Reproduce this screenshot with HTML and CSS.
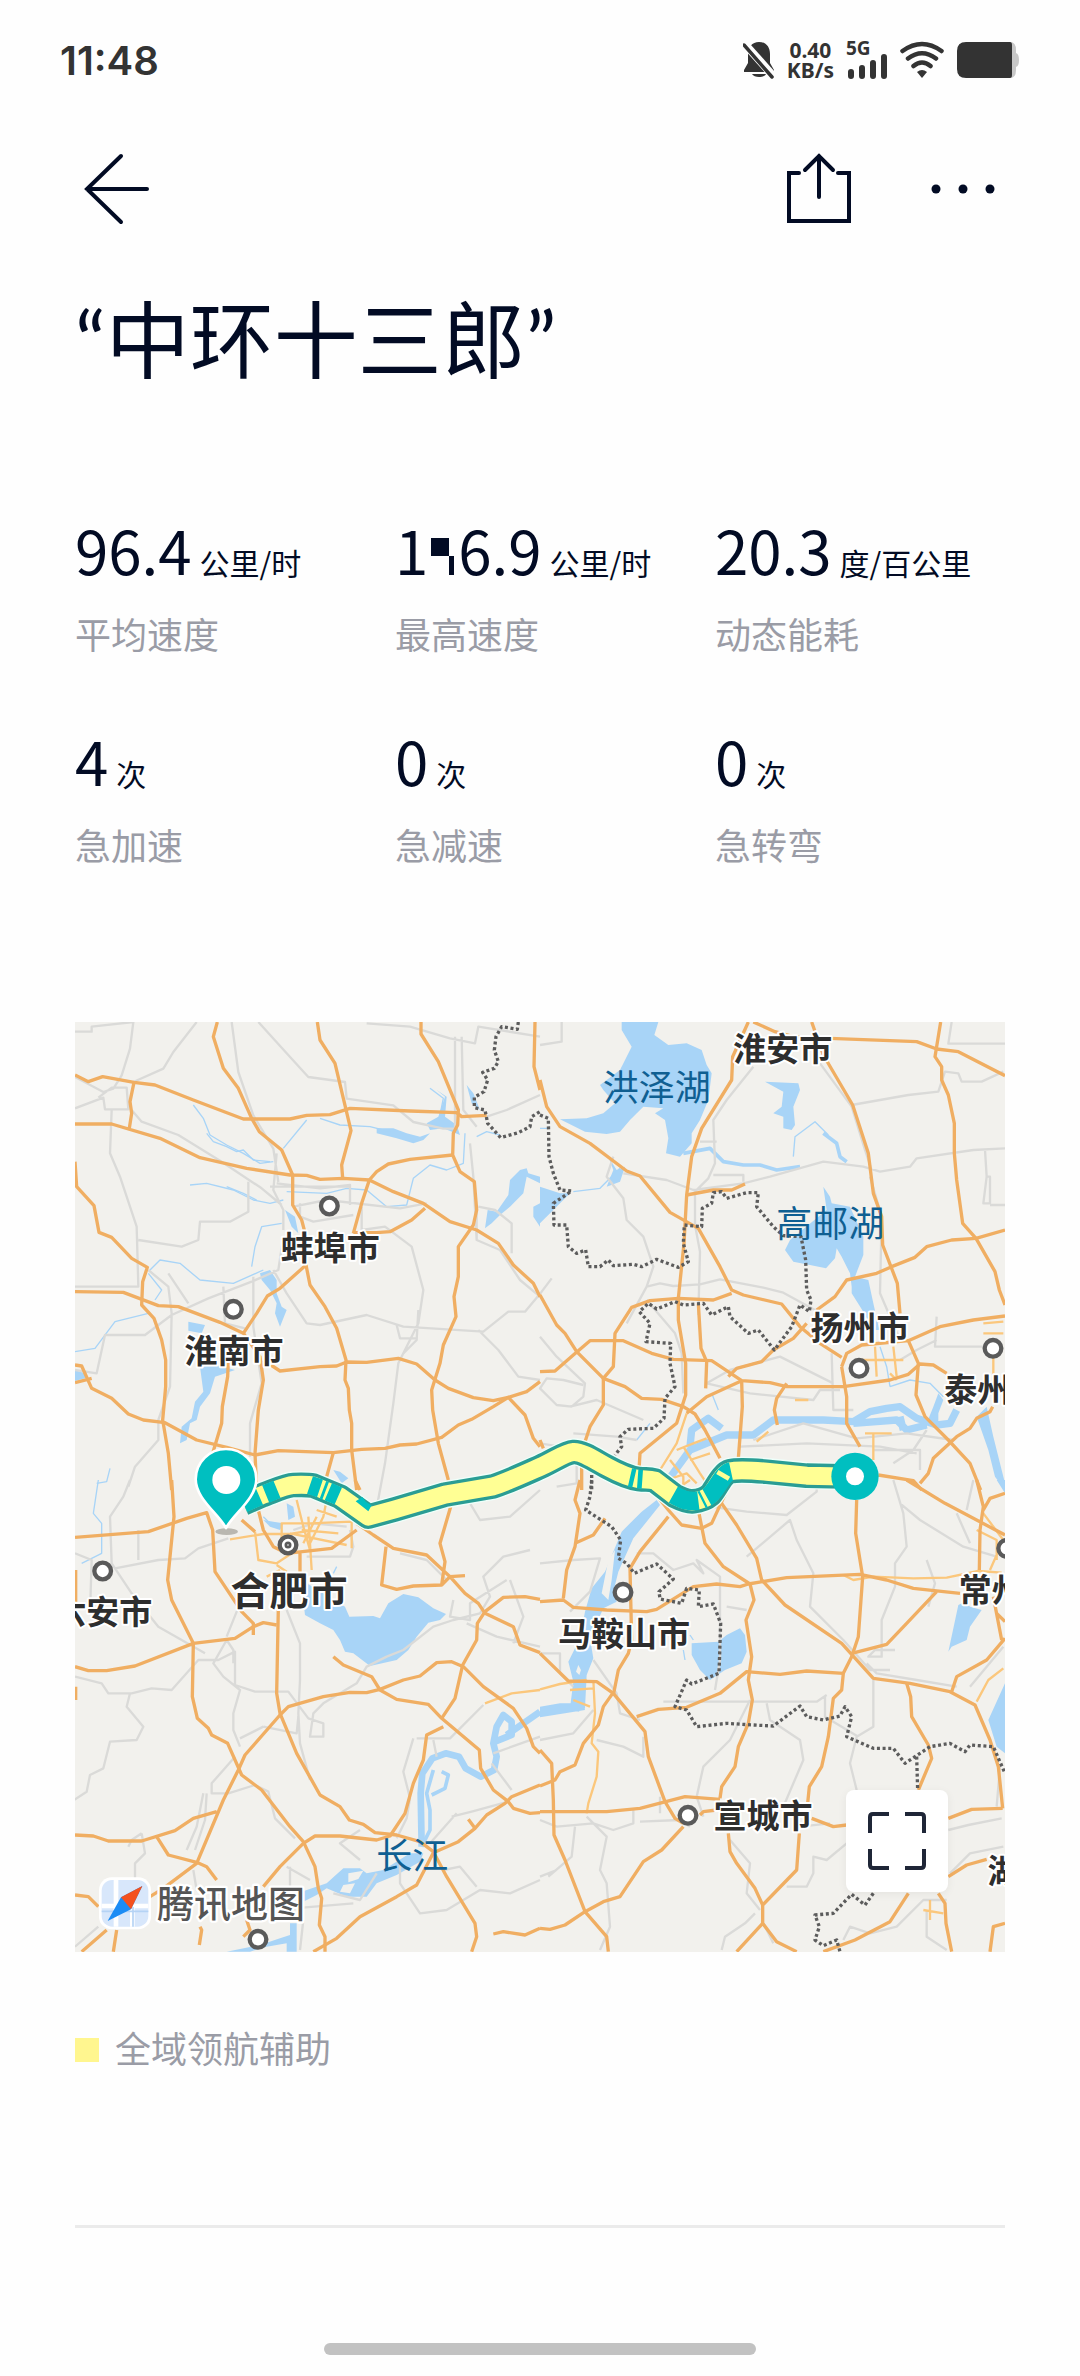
FILE: index.html
```html
<!DOCTYPE html>
<html lang="zh-CN">
<head>
  <meta charset="UTF-8">
  <meta name="viewport" content="width=device-width, initial-scale=1">
  <title>行程详情</title>
  <link rel="stylesheet" href="styles.css">
</head>
<body>

<div class="status-bar">
  <span class="clock">11:48</span>
  <div class="status-icons">
    <svg class="icon-bell" viewBox="0 0 32 38" fill="#333">
      <path d="M16 1c7 0 11 5 11 12v9l4 7v2H1v-2l4-7v-9C5 6 9 1 16 1z"/>
      <path d="M9 33h14c-2 4-12 4-14 0z"/>
      <path d="M-1 0 33 38" stroke="#fefefe" stroke-width="8"/>
      <path d="M1 4 29 36" stroke="#333" stroke-width="3.5" stroke-linecap="round"/>
    </svg>
    <div class="net-speed"><span>0.40</span><span>KB/s</span></div>
    <div class="signal">
      <span>5G</span>
      <svg viewBox="0 0 42 26" stroke="#333" stroke-width="6" stroke-linecap="round">
        <path d="M5 19v4M16 15v8M27 10v13M38 4v19"/>
      </svg>
    </div>
    <svg class="icon-wifi" viewBox="0 0 44 38" fill="none" stroke="#333" stroke-width="4.5" stroke-linecap="round">
      <path d="M2.500 10Q22-4 41.500 10M8 17.500Q22 7 36 17.500M13.500 25Q22 18 30.500 25"/>
      <path d="M17 31q5-4 10 0l-5 6z" fill="#333" stroke="none"/>
    </svg>
    <svg class="icon-battery" viewBox="0 0 64 38">
      <path d="M50 1h4q6 0 6 8v3q3 1 3 7t-3 7v3q0 8-6 8h-4z" fill="#c8c8c8"/>
      <path d="M10 1h44q2 0 2 3v30q0 3-2 3H10q-9 0-9-9V10q0-9 9-9z" fill="#333"/>
    </svg>
  </div>
</div>

<header class="nav">
  <button class="nav-btn" aria-label="返回">
    <svg viewBox="0 0 84 84"><path d="M46 10 12 43l34 33M12 43h60"/></svg>
  </button>
  <div class="nav-right">
    <button class="nav-btn" aria-label="分享">
      <svg viewBox="0 0 84 84"><path d="M22 27H12v48h60V27H61M42 10v41M28 24 42 10l14 14"/></svg>
    </button>
    <button class="nav-btn" aria-label="更多">
      <svg viewBox="0 0 84 84" class="dots"><circle cx="15" cy="43" r="4.500"/><circle cx="42" cy="43" r="4.500"/><circle cx="69" cy="43" r="4.500"/></svg>
    </button>
  </div>
</header>

<main class="container">
  <h1>“中环十三郎”</h1>

  <div class="stats">
    <div class="stat">
      <p class="value">96.4<span class="unit">公里/时</span></p>
      <p class="label">平均速度</p>
    </div>
    <div class="stat">
      <p class="value">1<svg class="mask" viewBox="0 0 30 46"><path d="M3 9h18v18h5v19h-5V27H3z"/></svg>6.9<span class="unit">公里/时</span></p>
      <p class="label">最高速度</p>
    </div>
    <div class="stat">
      <p class="value">20.3<span class="unit">度/百公里</span></p>
      <p class="label">动态能耗</p>
    </div>
    <div class="stat">
      <p class="value">4<span class="unit">次</span></p>
      <p class="label">急加速</p>
    </div>
    <div class="stat">
      <p class="value">0<span class="unit">次</span></p>
      <p class="label">急减速</p>
    </div>
    <div class="stat">
      <p class="value">0<span class="unit">次</span></p>
      <p class="label">急转弯</p>
    </div>
  </div>

  <div class="map">
    <svg class="map-canvas" viewBox="0 0 2790 2790">
      <!-- 西北 -->
      <g transform="translate(-45 -36)">
        <g class="water">
          <path d="M1275 655 1283 600 1310 605 1345 555 1350 510 1380 480 1400 475 1405 490 1440 500 1440 520 1400 500 1390 550 1350 590 1320 615 1295 640zM1440 580l-20 10v30l20 30zM420 1070l50-5 55 15-60 20-15 50-30 40-10 40-20 10-10 50-20 10 5-50 30-25 10-50 25-30zM600 790l30-10 20 30v40l15 40 15 10-20 50-15-40 5-30-20-40-25-30zM1100 340l35-20 20-60-25-20 30 20-5 60 35 25 10 30-50-20-40 5zM950 355l50 0 40 15 40 10 30-10-20 20-30 10-50-15-60-15zM1220 225l20 25 20 50-25-20zM45 1080l30 10v15l-30 8zM385 935l50 10-10 25-40-8zM820 1380l20 5 25 20-20 15zM675 600l30 20 10 50-20-20z"/>
        </g>
        <path class="river" d="M400 285l30 40 20 50 50 30 50 25 50 30 40-5M390 525l50-5 80 20 60 30 50 10 40-10M780 325l60 20 90 5 60 15M1110 235l40 30-10 50M1250 380l30-15 40 10M1215 370l-5 90-50 20-50-15-50 40-20 80-60 5-60-50-60-5-60 15-120-5M665 640l-60 10-20 60-10 60M270 780l30-30 60 10 60 50 100 10 90-40M265 790l40 50-20 30M45 1025l60-10 60-80 100-25M740 330l-70 85M150 1375l-10 40-30 5"/>
        <path class="river" d="M440 370l20 25 40 15 30 15 20-5 30 30 50 5M500 530l50 20 40 20" stroke-width="9"/>
        <g class="road-minor">
          <path d="M45 65h50v-15l125-14-10 80-25 80-25 40-30 10-85-45M45 295l85-32 5 35h70l-5-65h-45l-40 30M410 36l-70 90-30 50-90 40M155 300l-5 130 30 70 50 150 5 180H45M515 36l20 150 45 130 60 100 15 100M595 36l100 110 50 55 110 15 5 50 140 20 60 50 90 20h35V80M920 40l130 10 120 35 75 15 10-50 185 30M1440 255l-100 45-60 20M215 300l30 35 110 40 130 80 120 80 60 50M235 690l130 20 50-20 5-55h90l55-30v-90M630 530h240M700 590l100-20 220 25 80-15M650 520l130 15 90-10v60M720 580v40l40 15 120-20M905 590v70l70-10 80 60 35 130-15 100-60 120-15 120-25 180-30 160M1255 590l50 10 50 40v90M1250 590v100l70 30 60 90 60 50M670 680l-15 100-80 35-130 50-110 50-80 60-120 0-25 115-65-10M265 780l60 50 10 80-5 220-35 100v60l-70 80-20 60M325 790l60 90M580 800v150l25 170-35 120v100M640 780l40 70 60 90 40 5 140-30 110 35 240 15 75-60h50l50-60 30-40M1255 960l60 60 60 80 65 10M1010 945l10 40h50M1075 900l-5 90-40 40M1230 400l10 100 10 190M650 430l-10 110 30 60v60M490 830l5 110 60 15M1205 80l5 220 40 50"/>
        </g>
        <g class="road">
          <path d="M45 195 85 215 128 200 222 217 285 225 400 270 550 327 690 327 740 316 810 314 870 295 1050 303 1190 308 1205 320 1280 316"/>
          <path d="M222 217 210 275 215 310 208 355M45 342 155 342 300 385 420 443 560 475 690 495 740 496 780 508 850 505 928 510 1000 545 1090 580 1170 635 1250 660 1315 700 1360 765 1420 820 1440 860"/>
          <path d="M472 36 460 80 490 175 535 235 575 325 598 365 665 420 698 495 698 585 725 630 738 680 738 765 750 825 795 890 830 955 858 1050 855 1110 865 1135 868 1200 875 1240 875 1320 890 1440"/>
          <path d="M772 36 780 90 825 160 850 265 873 362 845 465 848 505"/>
          <path d="M1083 36 1083 72 1135 155 1195 300 1193 345 1180 370 1178 435 1200 485 1243 515 1250 600 1240 645 1195 710 1195 800 1182 860 1188 920 1150 1005 1140 1060 1115 1140 1118 1200 1135 1300 1165 1410"/>
          <path d="M1178 435 1050 448 985 462 950 485 928 510 905 580 880 670M1095 595 1055 630 990 665 950 668 880 668M738 765 660 835 622 858 590 910 550 970"/>
          <path d="M45 845 190 847 295 887 355 890 480 937 550 970 600 1040 610 1110 595 1200 585 1330 590 1440"/>
          <path d="M45 455 50 530 102 587 117 667 155 682 215 745 262 772 248 815 245 885 282 925 305 990 317 1050 317 1130 308 1230 325 1330 335 1440"/>
          <path d="M45 1065 65 1068 95 1135 155 1165 205 1212 250 1230 315 1238 410 1290 500 1312 585 1335 655 1322 820 1328 905 1318 975 1315 1020 1305 1070 1302 1145 1282 1195 1245 1235 1228 1300 1190 1345 1162 1400 1145 1440 1115M45 1118 95 1105"/>
          <path d="M610 1050 660 1083 780 1070 830 1068 860 1056 920 1057 1015 1045 1070 1062 1125 1110 1165 1135 1240 1163 1300 1172 1345 1162 1395 1215 1420 1285 1440 1310"/>
          <path d="M505 1050 503 1100 487 1190 485 1240 458 1330M820 1328 800 1400M1425 36 1422 170 1440 240"/>
        </g>
        <path class="border-line" d="M1375 36 1372 58 1325 50 1308 80 1303 120 1315 155 1303 175 1268 187 1283 210 1272 245 1243 262 1243 293 1275 300 1283 340 1322 383 1375 368 1410 350 1415 320 1440 305"/>
      </g>

      <!-- 东北 -->
      <g transform="translate(1395 -36)">
        <g class="water">
          <path d="M245 36 355 36 343 75 385 105 440 100 485 120 500 165 515 190 505 270 480 330 455 370 455 400 420 440 378 430 385 385 375 330 345 310 370 295 310 290 270 330 240 365 200 372 135 365 60 328 140 325 190 310 225 280 190 240 180 225 240 180 275 110 245 60z"/>
          <path d="M850 530 870 560 875 580 930 590 970 680 970 735 945 800 985 810 1000 880 1018 960 1000 960 970 905 935 850 935 830 930 790 905 740 890 715 885 745 858 775 810 765 760 755 735 720 750 690 860 600z"/>
          <path d="M675 215l100 5 5 20-20 50 5 55-10 15-25-5v-35l-30-10 25-20 5-45z"/>
          <path d="M1160 1240l20-50 15-40 15 20-15 40 0 40zM1310 1220l30-30 20 90 35 140v20l-30-40-20-80zM0 530l60 20 30 0-50 50-40 40z"/>
          <path d="M205 440l15 40-20 50 40-15 15-45-25 10z"/>
        </g>
        <g class="river wide">
          <path d="M370 1430l80-110 110-45 80 0 60-45 150 0 90 5 50-30 50-10 40-5 50 35 60 20 40-5 20-40M450 1310l5-50 50-35 40 30M940 1240l130-10 30 30 60-15M1080 1220l10 40" stroke-width="22"/>
        </g>
        <path class="river" d="M760 440l5-60 60-45 40 40M100 545l80-10 60-60M0 355h25M1050 1130l60-20 60 10 40 40M515 1150l20 50M1020 1010l20 60 10 60M290 1290l40-50"/>
        <path class="river stream" d="M430 430l80-15 40 40 60 10 50 0 50 15 70-10M850 370l40 30 10 40 20 15"/>
        <g class="road-minor">
          <path d="M0 105l65-10V36M640 170l-80 100-40 60 5 130-20 45-40 40v100l15 80-5 190M840 160l95 130 40 130 20 60M935 285l170-30 90-10 20-60 40 5 10 25h60l65-30M1235 36l-10 65h170M220 440l-20 60 50 65 10 65 50 50 30 90-20 60-60 110M250 490l130 20 80 30 150-20 80-20 160-45 120 15 50 15 90-15 20-25 170-25 100-5M520 495h90v20M1335 420l5 80h10v80h-20l10-80M1395 585h-45M480 395h50M320 830l40-10 40 8 80-5 60-15 130 25 60 15 110 60M320 870l85 100 20 60 5 120M990 500l35 120-5 230 60 140M0 980l50 60 85 80-5 40-35 30-45-5-50-50 20-30 50 5 60 15M90 1190l80-20 140 60M100 1270l130 10 60 10M500 1120l70-40 150-40 160 80M500 1120l130 30 190 20 20-30h60M875 1030l5 170h60M640 1290l150-50 160 45 150-15 140 20M600 1310l200-10 220 10 110 20M1190 920l-5 90h160M1080 1050l50-30 60-30M1060 1360l60-40 40-60M1000 1320h140v60M0 1300l60 10 60-10M50 1350l60 10v60l-60 10"/>
        </g>
        <path class="road-city" d="M440 1210 410 1300 360 1380M410 1320l50-20 40-15M430 1310l50 80 20 30M450 1350l60-20M390 1350l40 50v40M1005 1010l5 90M1060 1010l10 90M960 1050h130M1050 1090l20 20M1000 1270v80M975 1270h80M1330 940l60-5M1330 970h60M1360 1040v130M380 1410l60-20 30 30M650 1295l35-30M765 1170h40"/>
        <g class="road">
          <path d="M0 210 20 290 60 350 150 400 260 483 300 498 390 607 475 655 540 770 575 840 610 855 725 882 780 950 840 1000 905 1042"/>
          <path d="M625 36 578 140 575 210 485 355 455 440 440 555 432 700 415 865 415 930 437 1060 437 1155 410 1240 300 1330 297 1380"/>
          <path d="M640 36 705 65 760 80 870 85 1130 95 1190 117 1255 125 1395 197M815 36 850 135 938 285 985 430 1000 550 1025 620 1028 705 1072 820 1080 910"/>
          <path d="M1202 36 1185 140 1205 170 1205 210 1225 255 1243 340 1243 430 1250 510 1268 640 1308 685 1365 785 1378 840 1395 885"/>
          <path d="M1395 660 1308 685 1235 690 1160 710 1125 742 1055 770 1010 790 920 810 885 860 830 900M440 555 520 540 575 540 615 522"/>
          <path d="M0 855 50 945 75 970 110 1025 190 1105 255 1130 305 1165 365 1168 430 1190 465 1212 495 1260 540 1345"/>
          <path d="M0 1085 45 1083 100 1035 150 992 250 992 335 1030 400 1048 515 1052 605 1112 690 1118 740 1130 910 1130 1050 1110 1105 1093 1140 1062 1180 1065 1220 1090"/>
          <path d="M565 1100 590 1075 665 1055 700 1020 760 985 800 940M575 850 520 870 415 865 330 872 275 892 225 970 220 1070 190 1105 190 1185 150 1250 130 1310"/>
          <path d="M475 880 483 1015 500 1055 497 1135M605 1112 500 1160 440 1210M605 1112 607 1190 595 1345M740 1120 710 1165 703 1200 712 1245"/>
          <path d="M905 1070 920 1030 965 1005 1105 992 1200 950 1300 930 1395 918M905 1070 920 1160 920 1240 960 1310M1105 992 1135 1060 1128 1155 1155 1220 1225 1290 1290 1360 1322 1440"/>
          <path d="M1358 1190 1350 1205 1310 1225 1290 1255 1250 1280 1180 1345 1165 1390 1140 1420M1015 1395 1120 1412 1145 1440M125 1370v70M0 1290l10 25"/>
        </g>
        <path class="border-line" d="M0 315 25 325 27 440 40 490 60 540 95 543 40 580 42 645 80 645 85 710 110 730 137 720 145 770 180 770 205 750 220 767 280 763 305 770 350 748 415 772 445 755 430 700 433 645 485 650 487 595 515 580 520 548 545 545 560 565 620 548 655 548 650 590 700 650 730 677 783 680 797 750 800 840 813 870 808 905 780 885 755 950 703 1020 655 960 625 970 570 920 565 890 515 915 490 880 430 885 405 875 350 897 325 880 298 905 330 940 318 995 392 1000 390 1060 405 1130 375 1165 372 1225 340 1255 265 1258 240 1280 245 1310 225 1335M155 1395v45"/>
      </g>

      <!-- 西南 -->
      <g transform="translate(-45 1374)">
        <g class="water">
          <path d="M740 310 790 340 855 380 868 410 940 408 960 415 985 370 1030 342 1075 352 1120 385 1158 402 1140 420 1105 428 1070 470 1045 510 1010 540 930 558 880 520 855 515 840 480 820 450 780 430 735 405 732 380z"/>
          <path d="M800 1210l50-45 50 0 20 15 50-10 80-50 40 0-10 25-70 40-60 25-30 40-60 0-60-25-30 20-40 20-5 0v-30zM680 70l20 10 5 30-20 10zM610 120l30 5 30 5-10 20-30-10zM690 1330h20v85h-30v-25l-60 10-50 15h-70l100-20 60-20 30-10z"/>
        </g>
        <path d="M865 1180l45-8-15 25-30 10zM850 1215l35-5-15 30-30-5z" fill="#f2f1ed"/>
        <g class="river wide">
          <path d="M1085 1100l-3-160 5-60 30-45 40-15 40 10 20 35 45 25 40-20 8-40-10-40 10-50 20-35 25 20v40l-50 20M1340 765l100-70"/>
        </g>
        <path class="river stream" d="M1085 1100l25-50 0-60-10-50 20-70M1115 945l40-20 10-40-20-10"/>
        <path class="river" d="M115 0l-15 100 25 30v90l-60 30M820 280l10-20M610 110l30 30"/>
        <g class="road-minor">
          <path d="M210 0l-20 50-40 60 5 140 60 90 80 100 140 80M235 150v90M165 265l130-25 80-5 40-30 90-30M45 590l80 20 20 30 70 0 60-15 60 5 80-90 60 0 50-25v100l60 20 100 0 60 80 45 15v40h-40l10-70 30-30 100-60 30-50 60-30 50-20 90-70 60-20 80-20 30-50-20-60 60-60 80-20M195 640l15 0-10 40 50 60-20 40-80 5-20 80-40 20-10 50-60 40M500 480l-40 70 30 40 50 40-20 70 0 50 20 50M500 480l20 30v40M500 470l40-100M680 390l40 100 0 110-5 100 5 90 30 110M610 740l-70 35M610 740l100 20 5-50M525 830l-70 80 0 30h50l80-25 40 20 20 80 60 60M430 940l-20 100-30 70M440 940l-5 80-30 90M245 1060l-30 20-10 20M245 1060l10 60-30 30 0 100M1070 775h100l100-100M1060 775l-30 100 20 80-10 60-30 60M1120 780l10 50M1300 820l140-50M1295 850l60 80M1175 1010l60-15 110-30M1190 1000l-80 90M900 1050l-60 40 60 50M680 1160l70 40M950 1180l-50 80-80-20M1020 1150v60l60 90 80-10 100-60 90 10 90-40M1250 1220l-50-60-50 10M700 1285l180-15M730 1320l-10 90M400 1170l10 60 70 10M690 1160l0 80M870 150l10 50-10 30h-130M700 150l60-20 100 10M1020 220l80 20 60 60M1180 360l-10 50 60 10v-50l110-70M1220 430l90 40 130 30M1350 300l40 110-30 80M1200 20l60 100 90-10 90-80M90 400l5-160-50-20M45 1400l70-60"/>
        </g>
        <path class="road-city" d="M510 178l100-16 80 0 60-10M585 155l10 85 55 10 60-40M665 200V130l80 0 130-5v80M745 110l10 160M770 90l60 20M710 60l20 80 20 70M690 160l170 35M730 190l40-80M750 190l40-80 10-50M620 290l40-20M1275 670l80-30 85-10M725 150l110 10M650 255l30 20"/>
        <g class="road">
          <path d="M335 0 342 110 323 300 335 360 400 490 397 650 412 715 445 745 455 765 503 790 545 885 605 930 690 1040 730 1085 765 1160 775 1225 785 1255 778 1335 795 1370 795 1415"/>
          <path d="M45 172 265 155 380 115 440 98 458 150 465 275 545 395 580 430 580 465M45 560 85 572 140 572 225 558 400 490 525 475 580 440 610 428 650 435"/>
          <path d="M655 385 650 640 660 700 710 820 780 945 840 980 868 1020 910 1033 945 1058 1010 1065 1080 1085 1120 1115"/>
          <path d="M820 530 850 555 935 590 960 630 1010 658 1105 673 1145 715 1258 810 1262 865 1300 930 1345 965"/>
          <path d="M660 705 685 680 790 650 870 637 920 638 960 628 1030 600 1080 588 1130 548 1175 545 1210 560 1270 620 1360 685 1400 745 1420 800 1440 820"/>
          <path d="M660 705 555 825 535 870 490 960 410 1150 310 1225 270 1250M45 1065 100 1068 145 1083 245 1083 345 1052 400 1015 470 995M290 1070 325 1125 410 1147 440 1160 470 1200"/>
          <path d="M610 1220 660 1160 730 1090 765 1068 840 1068 950 1080 990 1068 1035 1000 1060 910 1090 840 1100 765 1150 740M1145 715 1185 655 1208 555 1250 480 1252 430 1275 395 1330 352 1395 350 1440 358"/>
          <path d="M885 0 900 30M890 130 940 165 1000 205 1100 225 1170 290 1215 340 1255 370 1275 400 1360 440 1380 495 1440 518M978 200 965 315 1010 328 1060 318 1145 315 1170 290 1215 287M1172 80 1140 190 1155 245 1145 315"/>
          <path d="M1345 965 1360 985 1410 1000 1440 998M1440 915 1355 950 1335 970 1280 1005 1245 1045 1195 1085 1120 1118 1070 1215 1010 1250 900 1310 830 1375 760 1415M1245 1045 1225 1018"/>
          <path d="M1120 1115 1160 1190 1245 1330 1250 1370 1235 1415M1300 1362 1330 1355 1395 1365 1440 1345M45 1245 85 1250 115 1280M65 1415 140 1350M160 1415 170 1350M420 1340 425 1350 418 1395M560 1320 570 1350 550 1370"/>
          <path d="M545 120 585 155M595 90 610 150 640 200 680 220 815 205 890 150M720 220 720 290M47 270v95M47 620v40"/>
        </g>
      </g>

      <!-- 东南 -->
      <g transform="translate(1395 1374)">
        <g class="water">
          <path d="M350 60l10 15-80 100-45 100-15 60 10 30-40 20-40 90 10 60-20 50-5 100-20 10-25-10 10-80-15-60 35-70 15-80 20-70 40-50 50-120 60-60zM0 680l60-10 70 0 5 20-60 10-75 12z"/>
          <path d="M455 490l80-5 25-20 40-20 15 20 5 50-15 35-50 20-45 30-30-30-25-45zM1255 375l20-10 15 15 35 10-35 50-10 40-45 20-10 15zM1395 610v210l-25-20-25-80zM1370 0h25v40z"/>
        </g>
        <path d="M205 240l20-30-10 90-10 60-20-20zM115 555l8 15-5 15-10-10z" fill="#f2f1ed"/>
        <path class="river" d="M450 465l10 15M430 510l5 30"/>
        <g class="road-minor">
          <path d="M0 250l100-10 80-5-30 100-60 60M290 220l50 0 60 50 60-20 30 30-20-40 70 50 0 250-15 90M510 80l110 15 120 10 90-70V0M620 230l130-110 20 60 50 100-10 100 100 100 80 90 60 0M560 380l60 10M1060 0l30 100 10 100-35 50 0 70-40 100 0 110h-40l20-20h60M980 550l30 30 120 20 120 20M1080 70l60 50 130 80 100 30M1160 240l25 70-20 70M1250 100l40 90M0 520l60 0v60l40 40M160 540l70 100 10 60 60 20M170 780l80 20 60 30v-60M0 780l100-20 60-70M370 665l280 0 180 0 30-20M630 660l-60 120-80 80-20 90 20 60M680 670l10 50 90 60 10 60-60 140M855 650v60l100 60M1000 600v140l-50 30-20 80 20 80M0 1020l50 20 110-10 60 20 60-20 0-40M300 1025l120-5 30 20M360 950v50M140 1010l60 60-20 100 20 40 10 130-30 70M105 1040l-10 90-70 60M0 1190l50-20M570 1080l60 70-10 90 40 50M740 1220l60 0 20-40 0-50 40 10 60-50M545 1410l10-40 60-40 30-30M670 1330l30 60M910 1380l20-40 60 20 80-20 80-80h70M1160 1290l0 80 60 40M1225 1050l60-15 100-20M1230 1180l60-60 100-20M1290 620l100-120M1380 860l-10 120M780 1040l90-10M1280 90l20-90"/>
        </g>
        <path class="road-city" d="M0 628 60 612 140 600M90 630l70-5M100 660l50 20M160 600 165 700 155 790 175 815 170 890 145 970 140 1000M910 285l30 15 60-10 120 5 100-2 95-20 70 5M1330 100l60 80-40 90M1310 665 1345 600 1390 565M1310 150l60 30v60M1150 1290l60 10M1170 1260v60M420 20l30-20"/>
        <g class="road">
          <path d="M0 365 70 360 100 382 200 390 320 395 350 388 460 320 530 312 600 320 625 312 740 293 960 283 1040 300 1120 325 1260 340M120 0 105 60 120 100 105 200 80 270 70 355M105 190 160 165 195 115"/>
          <path d="M345 40 385 90 425 135 485 145 515 130 575 0M385 110 300 215 270 265 275 480 265 520 235 570 220 645"/>
          <path d="M475 90 495 190 550 260 630 312 642 360 618 420 635 530 625 600 637 660 625 730 595 800 585 860 545 920 540 955"/>
          <path d="M545 70 590 135 650 235 665 300 735 375 905 490 1000 595 1110 610 1230 635 1305 675 1350 780 1375 860 1388 985"/>
          <path d="M950 60 947 160 968 290 955 470 935 530 910 580 905 630 880 655 865 770 845 860 808 920 800 1000M0 520 85 603 170 605 220 640 315 755 325 830 375 965 405 1015 430 1030"/>
          <path d="M290 710 355 688 440 682 540 640 620 575 720 583 800 573 910 580M935 520 1040 493 1100 430 1190 335M0 918 45 900 60 875 105 855 130 790 175 735 190 680 218 640"/>
          <path d="M0 810 35 850 40 960 42 1065 75 1140 135 1295 200 1370 205 1415M0 995 200 995 300 985 435 950 540 958M430 1040 365 1110 310 1145 240 1250 190 1265 135 1295 75 1335 30 1348 0 1345"/>
          <path d="M480 1005 490 995 530 990M815 1015 880 1040 920 1035M565 1060 570 1115 590 1150 645 1225 668 1275 668 1330 590 1415M668 1330 710 1385 770 1415M778 1060 770 1170 668 1275"/>
          <path d="M1100 610 1112 650 1115 710 1165 795 1175 835 1135 930M1388 985 1295 988 1225 1015M1225 1190 1280 1155 1340 1138M850 1415 945 1380 1050 1325 1105 1240M1195 1240 1215 1270 1218 1330 1235 1415M1395 1330 1360 1340 1350 1415"/>
          <path d="M1235 635 1250 590 1340 540 1395 475M1100 0 1215 70 1395 165M1310 0 1330 80 1320 150 1318 270M1395 40 1350 55 1330 90M1360 350 1385 480M1370 400 1395 425"/>
        </g>
        <path class="border-line" d="M155 0 150 50 137 90 215 140 242 180 235 235 260 250 283 280 350 252 400 297 357 335 360 357 425 370 440 325 478 330 475 380 520 372 542 430 537 580 455 612 440 600 405 680 440 690 470 740 560 730 640 735 700 738 780 678 800 710 850 720 900 708 915 680 935 710 920 770 1000 805 1060 805 1095 850 1170 800 1230 790 1275 815 1290 795 1360 800 1395 880M1130 830 1133 930M1000 1240 975 1275 935 1243 880 1300 825 1305 838 1340 825 1380 850 1397 890 1380 900 1415"/>
      </g>

      <!-- 行驶路线 -->
      <g class="route-halo"><path id="route" d="M505 1444 560 1420C590 1410 630 1390 655 1389S700 1388 715 1391L795 1424 880 1484 960 1462 1110 1418 1255 1393C1300 1378 1350 1355 1395 1335S1470 1292 1495 1290 1560 1315 1595 1334 1665 1368 1690 1371 1720 1370 1740 1376L1800 1422C1820 1432 1838 1440 1855 1438S1890 1432 1905 1419 1940 1354 1965 1348 2040 1346 2075 1349L2195 1361 2340 1364"/></g>
      <use href="#route" class="route-edge"/>
      <use href="#route" class="route-assist"/>
      <g class="route-manual">
        <path d="M505 1444 553 1423M572 1416 606 1402M705 1389 735 1399M744 1403 752 1406M760 1409 790 1422"/>
        <path d="M1665 1366 1678 1369M1688 1371 1702 1372M1795 1418C1820 1432 1838 1440 1870 1436M1880 1434 1886 1431M1896 1426 C1925 1410 1940 1354 1968 1348"/>
      </g>
      <path d="M842 1438 862 1425 873 1440 890 1450 880 1468z" fill="#00bfc0"/>
      <path d="M1927 1350 1962 1370" stroke="#ffff94" stroke-width="14"/>

      <!-- 起点终点 -->
      <ellipse cx="455" cy="1529" rx="34" ry="10" fill="#b9b7b0"/>
      <path d="M453 1518C430 1475 362 1430 362 1372a91 91 0 0 1 182 0c0 58-68 103-91 146z" fill="#00bfc0" stroke="#fff" stroke-width="8"/>
      <circle cx="454" cy="1374" r="42" fill="#fff"/>
      <circle cx="2340" cy="1363" r="71" fill="#00bfc0"/>
      <circle cx="2340" cy="1363" r="27" fill="#fff"/>

      <g class="city-dots">
        <circle cx="763" cy="552" r="25"/><circle cx="475" cy="862" r="25"/>
        <circle cx="2352" cy="1039" r="25"/><circle cx="2754" cy="979" r="25"/>
        <circle cx="83" cy="1647" r="25"/><circle cx="549" cy="2752" r="25"/>
        <circle cx="1644" cy="1711" r="25"/><circle cx="1839" cy="2380" r="25"/>
        <circle cx="2795" cy="1579" r="25"/><circle cx="639" cy="1569" r="25"/>
        <circle cx="639" cy="1569" r="4"/>
      </g>

      <g class="city">
        <text x="766" y="713">蚌埠市</text>
        <text x="477" y="1024">淮南市</text>
        <text x="2123" y="116">淮安市</text>
        <text x="2355" y="954">扬州市</text>
        <text x="2756" y="1139">泰州市</text>
        <text x="83" y="1807">六安市</text>
        <text x="1647" y="1872">马鞍山市</text>
        <text x="2064" y="2418">宣城市</text>
        <text x="2800" y="1740">常州市</text>
        <text x="2886" y="2584">湖州市</text>
        <text class="capital" x="642" y="1749">合肥市</text>
      </g>
      <g class="lake">
        <text x="1745" y="238">洪泽湖</text>
        <text x="2266" y="644">高邮湖</text>
        <text x="1012" y="2542">长江</text>
      </g>

      <!-- 地图商标识 -->
      <rect x="72" y="2566" width="156" height="156" rx="38" fill="#fff"/>
      <rect x="80" y="2574" width="140" height="140" rx="32" fill="#d8e7fb"/>
      <path d="M123 2574v140M80 2652h140M172 2650v64" stroke="#fff" stroke-width="14"/>
      <path d="M80 2668h140M174 2655v59" stroke="#b5d3f5" stroke-width="5"/>
      <path d="M202 2592 138 2626 98 2697 168 2662z" fill="#1b8cf5"/>
      <path d="M202 2592 138 2626 168 2662z" fill="#f4511e"/>
      <text class="brand" x="468" y="2689">腾讯地图</text>
    </svg>
    <button class="fullscreen-btn" aria-label="全屏查看地图">
      <svg viewBox="0 0 58 58"><path d="M2 21V5q0-3 3-3h16M37 2h16q3 0 3 3v16M56 37v16q0 3-3 3H37M21 56H5q-3 0-3-3V37"/></svg>
    </button>
  </div>

  <div class="legend"><span class="swatch"></span>全域领航辅助</div>
</main>

<div class="home-bar"></div>

</body>
</html>
```
FILE: styles.css
```css
* {
  box-sizing: border-box;
}
body {
  font-family: "Noto Sans", "Noto Sans CJK SC", sans-serif;
  background-color: #fefefe;
  color: #020b24;
  margin: 0;
  min-height: 100vh;
  display: flex;
  flex-direction: column;
}
h1, p {
  margin: 0;
}
button {
  background: none;
  border: none;
  padding: 0;
  cursor: pointer;
}
svg {
  display: block;
}

/* status bar */
.status-bar {
  display: flex;
  justify-content: space-between;
  align-items: center;
  height: 120px;
  padding: 0 60px;
  color: #333;
}
.clock {
  font-family: Inter, sans-serif;
  font-size: 40px;
  font-weight: 600;
}
.status-icons {
  display: flex;
  align-items: center;
  gap: 12px;
}
.icon-bell {
  width: 32px;
  height: 38px;
}
.net-speed {
  display: flex;
  flex-direction: column;
  align-items: center;
  font-size: 21px;
  line-height: 20px;
  font-weight: 700;
}
.signal {
  position: relative;
  width: 42px;
  height: 38px;
}
.signal span {
  position: absolute;
  top: -2px;
  left: 0;
  font-size: 19px;
  line-height: 18px;
  font-weight: 700;
}
.signal svg {
  position: absolute;
  right: 0;
  bottom: 0;
  width: 42px;
  height: 26px;
}
.icon-wifi {
  width: 44px;
  height: 38px;
}
.icon-battery {
  width: 64px;
  height: 38px;
}

/* top navigation */
.nav {
  display: flex;
  justify-content: space-between;
  align-items: center;
  height: 136px;
  padding: 0 75px;
}
.nav-right {
  display: flex;
  gap: 60px;
}
.nav-btn {
  width: 84px;
  height: 84px;
}
.nav-btn svg {
  fill: none;
  stroke: #020b24;
  stroke-width: 4;
  stroke-linecap: round;
}
.nav-btn .dots {
  fill: #020b24;
  stroke: none;
}

.container {
  padding: 0 75px;
  flex: 1;
}
h1 {
  font-family: Lato, "Noto Sans CJK SC", sans-serif;
  font-size: 84px;
  line-height: 120px;
  font-weight: 400;
  margin-top: 24px;
}

/* trip numbers */
.stats {
  display: grid;
  grid-template-columns: 320px 320px 1fr;
  row-gap: 54px;
  margin-top: 107px;
}
.value {
  font-family: "Noto Sans CJK SC", sans-serif;
  font-size: 60px;
  line-height: 84px;
  font-weight: 400;
  white-space: nowrap;
}
.unit {
  font-size: 30px;
  line-height: 1;
  margin-left: 8px;
}
.mask {
  display: inline-block;
  width: 30px;
  height: 46px;
  fill: #020b24;
}
.label {
  margin-top: 16px;
  font-size: 36px;
  line-height: 57px;
  color: #9a9ca6;
}

/* route map */
.map {
  position: relative;
  margin-top: 147px;
  background-color: #f2f1ed;
  overflow: hidden;
}
.map-canvas {
  width: 100%;
  height: auto;
  fill: none;
  stroke-linejoin: round;
}
.water {
  fill: #a8d4f7;
}
.river {
  stroke: #a8d4f7;
  stroke-width: 4;
}
.stream {
  stroke-width: 11;
}
.wide {
  stroke-width: 20;
}
.road-minor {
  stroke: #dadad8;
  stroke-width: 7;
}
.road {
  stroke: #f0ae62;
  stroke-width: 10;
}
.road-city {
  stroke: #fbc77c;
  stroke-width: 7;
}
.border-line {
  stroke: #5c5c5c;
  stroke-width: 10;
  stroke-dasharray: 9 8;
}
.route-halo {
  stroke: #effffa;
  stroke-width: 82;
}
.route-edge {
  stroke: #2a9d94;
  stroke-width: 74;
}
.route-assist {
  stroke: #ffff94;
  stroke-width: 54;
}
.route-manual {
  stroke: #00bfc0;
  stroke-width: 56;
}
.city-dots {
  fill: #fff;
  stroke: #5a5a5a;
  stroke-width: 13;
}
.city, .lake, .brand {
  font-family: "Noto Sans CJK SC", sans-serif;
  text-anchor: middle;
  paint-order: stroke;
  stroke-linejoin: round;
}
.city {
  font-size: 99px;
  font-weight: 700;
  fill: #2e2e2e;
  stroke: #fff;
  stroke-width: 12;
}
.city .capital {
  font-size: 117px;
}
.lake {
  font-size: 108px;
  fill: #0f5f92;
}
.brand {
  font-size: 111px;
  font-weight: 500;
  fill: #555;
  stroke: #fff;
  stroke-width: 14;
}
.fullscreen-btn {
  position: absolute;
  right: 57px;
  bottom: 60px;
  width: 102px;
  height: 102px;
  background-color: #fff;
  border-radius: 8px;
  box-shadow: 0 2px 10px rgba(0, 0, 0, 0.06);
  display: flex;
  align-items: center;
  justify-content: center;
}
.fullscreen-btn svg {
  width: 58px;
  height: 58px;
  fill: none;
  stroke: #1f2637;
  stroke-width: 4;
}

.legend {
  display: flex;
  align-items: center;
  gap: 16px;
  margin-top: 69px;
  padding-bottom: 147px;
  font-size: 36px;
  line-height: 57px;
  color: #9a9ca6;
  border-bottom: 3px solid #ebebeb;
}
.swatch {
  width: 24px;
  height: 24px;
  background-color: #fff68f;
}

.home-bar {
  width: 40%;
  height: 12px;
  margin: 0 auto 21px;
  background-color: #c2c2c2;
  border-radius: 6px;
}
```
